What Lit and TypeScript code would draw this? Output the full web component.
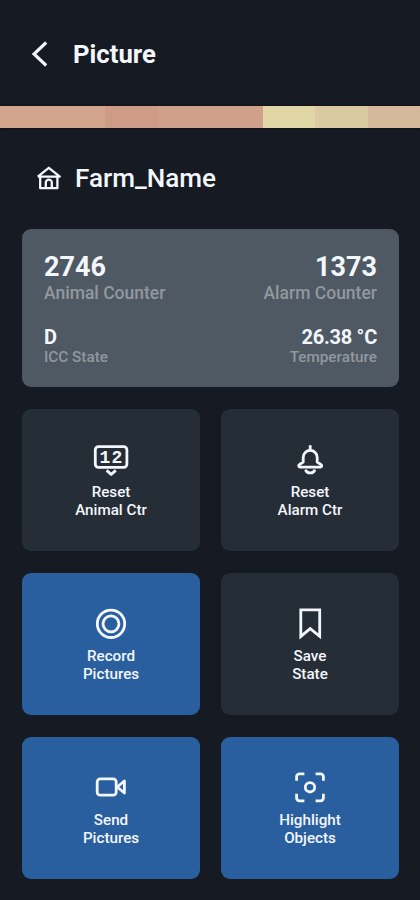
import { LitElement, html, svg, css } from "lit";
import { customElement, property } from "lit/decorators.js";
import { classMap } from "lit/directives/class-map.js";

const icons: Record<string, unknown> = {
  counter: svg`<rect x="2.3" y="4.6" width="31.6" height="20.8" rx="3.2"/>
    <text x="6.6" y="20.9">1</text><text x="18.4" y="20.9">2</text>
    <path d="M13.6 28.4 18.2 32.4 22.8 28.4"/>`,
  bell: svg`<path d="M18.2 3.2V8"/>
    <path d="M11.2 20V15.4a7 7 0 0 1 14 0V20l3.9 2.7a1.3 1.3 0 0 1-.7 2.4H8a1.3 1.3 0 0 1-.7-2.4Z"/>
    <path d="M13.6 27.6a4.7 4.2 0 0 0 9.2 0"/>`,
  record: svg`<circle cx="18" cy="17.8" r="13.7"/><circle cx="18" cy="17.8" r="8"/>`,
  bookmark: svg`<path stroke-linejoin="miter" d="M8.8 3.9H27.7V30.4L18.2 22.6 8.8 30.4Z"/>`,
  camera: svg`<rect x="4.2" y="8.8" width="19" height="16.4" rx="3"/>
    <path d="M24.2 17 31.4 11V23Z"/>`,
  focus: svg`<path d="M4.6 10.8V6.6a2.8 2.8 0 0 1 2.8-2.8h5M23.6 3.8h5a2.8 2.8 0 0 1 2.8 2.8v4.2M31.4 23.8V28a2.8 2.8 0 0 1-2.8 2.8h-5M12.4 30.8h-5A2.8 2.8 0 0 1 4.6 28v-4.2"/>
    <circle cx="18" cy="17.3" r="4.7"/>`,
};

@customElement("action-tile")
export class ActionTile extends LitElement {
  @property() icon = "";
  @property() first = "";
  @property() second = "";
  @property({ type: Boolean }) active = false;

  static styles = css`
    :host { display: block; }
    .tile {
      box-sizing: border-box; width: 100%; height: 142px; padding: 33px 0 0;
      border: 0; border-radius: 9px; background: #252d36; color: #f3f6fb;
      display: flex; flex-direction: column; align-items: center;
      font: 500 15.2px/17.6px Roboto, sans-serif;
    }
    .active { background: #295f9e; }
    svg {
      width: 36px; height: 36px; margin-bottom: 6px; fill: none;
      stroke: currentColor; stroke-width: 2.8; stroke-linejoin: round;
    }
    text { fill: currentColor; stroke: none; font: 700 18px "Liberation Mono", monospace; }
  `;

  render() {
    return html`<button class=${classMap({ tile: true, active: this.active })}>
      <svg viewBox="0 0 36 36">${icons[this.icon]}</svg>
      <span>${this.first}</span><span>${this.second}</span>
    </button>`;
  }
}

@customElement("app-root")
export class AppRoot extends LitElement {
  static styles = css`
    :host {
      display: flex; flex-direction: column; height: 900px; overflow: hidden;
      background: #161a22; color: #f3f6fb; font-family: Roboto, sans-serif;
    }
    header { box-sizing: border-box; height: 106px; display: flex; align-items: center; padding: 1px 0 0 30px; flex: none; }
    .back { width: 18px; height: 28px; margin-right: 25px; }
    svg { fill: none; stroke: currentColor; }
    h1 { margin: 0; font-size: 25.7px; line-height: 30px; font-weight: 700; }
    .strip { height: 22px; display: flex; flex: none; box-shadow: 0 0 2px #08090d; }
    .strip i { flex: 1; }
    .s1, .s2 { background: #d4a58d; }
    .s3 { background: #ce9b86; }
    .s4, .s5 { background: #d1a08b; }
    .s6 { background: #e1d6a5; }
    .s7 { background: #dbc9a1; }
    .s8 { background: #d5b899; }
    .farm { box-sizing: border-box; height: 101px; display: flex; align-items: center; padding: 0 0 2px 36px; flex: none; }
    .home { width: 26px; height: 26px; margin-right: 13px; }
    h2 { margin: 0; font-size: 26.1px; line-height: 30px; font-weight: 500; }
    .card {
      box-sizing: border-box; height: 158px; margin: 0 21px 22px 22px; padding: 23px 22px 0;
      background: #4e5963; border-radius: 9px; flex: none;
    }
    .row { display: flex; justify-content: space-between; }
    .row div:last-child { text-align: right; }
    .value { font-weight: 700; font-size: 27px; line-height: 30px; }
    .label { color: #92989f; font-weight: 500; font-size: 17.5px; line-height: 22px; }
    .minor { margin-top: 22px; }
    .minor .value { font-size: 20px; line-height: 22px; letter-spacing: -0.25px; }
    .minor .label { font-size: 15.3px; line-height: 19px; }
    .grid { display: grid; grid-template-columns: 178px 178px; gap: 22px 21px; margin: 0 21px 0 22px; }
  `;

  render() {
    return html`
      <header>
        <svg class="back" viewBox="0 0 18 28" stroke-width="3.1"><path d="M16.2 2.5 4 14 16.2 25.5"/></svg>
        <h1>Picture</h1>
      </header>
      <div class="strip">${[1, 2, 3, 4, 5, 6, 7, 8].map((n) => html`<i class="s${n}"></i>`)}</div>
      <div class="farm">
        <svg class="home" viewBox="0 0 26 26" stroke-width="2.3" stroke-linejoin="round">
          <path d="M1.8 11.6 12.8 2.8 23.8 11.6H1.8"/><path d="M4.2 11.6V23.2H21.4V11.6"/>
          <path d="M9.8 23V17.6a3 3 0 0 1 6 0V23"/>
        </svg>
        <h2>Farm_Name</h2>
      </div>
      <section class="card">
        <div class="row">
          <div><div class="value">2746</div><div class="label">Animal Counter</div></div>
          <div><div class="value">1373</div><div class="label">Alarm Counter</div></div>
        </div>
        <div class="row minor">
          <div><div class="value">D</div><div class="label">ICC State</div></div>
          <div><div class="value">26.38 °C</div><div class="label">Temperature</div></div>
        </div>
      </section>
      <main class="grid">
        <action-tile icon="counter" first="Reset" second="Animal Ctr"></action-tile>
        <action-tile icon="bell" first="Reset" second="Alarm Ctr"></action-tile>
        <action-tile icon="record" first="Record" second="Pictures" active></action-tile>
        <action-tile icon="bookmark" first="Save" second="State"></action-tile>
        <action-tile icon="camera" first="Send" second="Pictures" active></action-tile>
        <action-tile icon="focus" first="Highlight" second="Objects" active></action-tile>
      </main>
    `;
  }
}
